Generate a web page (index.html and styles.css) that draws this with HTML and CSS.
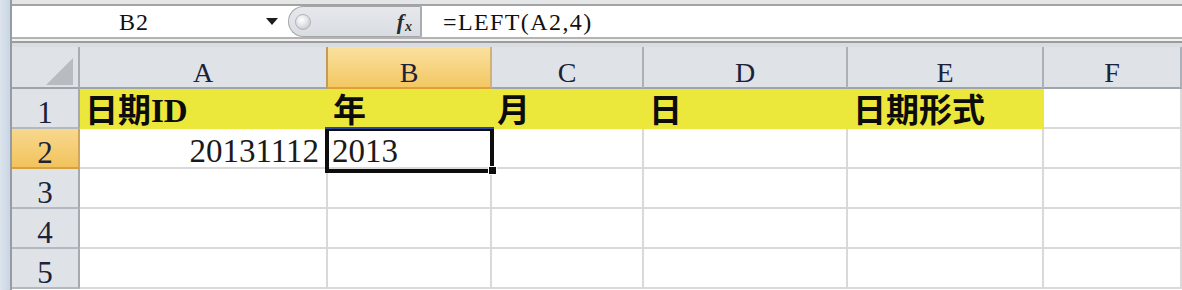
FILE: index.html
```html
<!DOCTYPE html>
<html lang="zh">
<head>
<meta charset="utf-8">
<title>Excel LEFT</title>
<link rel="stylesheet" href="styles.css">
</head>
<body>
<div class="app">
  <div class="strip"></div>
  <div class="main">
    <div class="topband"></div>
    <div class="fbar">
      <div class="namebox"><span class="name">B2</span><span class="caret"></span></div>
      <div class="fxctl"><span class="knob"></span><span class="fx"><i class="f">f</i><i class="x">x</i></span></div>
      <div class="formula">=LEFT(A2,4)</div>
    </div>
    <div class="divider"></div>
    <div class="sheet">
      <div class="c corner"><svg class="tri" width="28" height="27" viewBox="0 0 28 27"><polygon points="27,0 27,27 0,27" fill="#b8bbbf"/></svg></div>
      <div class="c ch ch-a">A</div>
      <div class="c ch ch-sel">B</div>
      <div class="c ch">C</div>
      <div class="c ch">D</div>
      <div class="c ch">E</div>
      <div class="c ch">F</div>

      <div class="c rh">1</div>
      <div class="c y">日期ID</div>
      <div class="c y">年</div>
      <div class="c y">月</div>
      <div class="c y">日</div>
      <div class="c y">日期形式</div>
      <div class="c"></div>

      <div class="c rh rh-sel">2</div>
      <div class="c num right">20131112</div>
      <div class="c num active">2013<div class="sel"><span class="handle"></span></div></div>
      <div class="c"></div>
      <div class="c"></div>
      <div class="c"></div>
      <div class="c"></div>

      <div class="c rh">3</div>
      <div class="c"></div><div class="c"></div><div class="c"></div><div class="c"></div><div class="c"></div><div class="c"></div>

      <div class="c rh">4</div>
      <div class="c"></div><div class="c"></div><div class="c"></div><div class="c"></div><div class="c"></div><div class="c"></div>

      <div class="c rh">5</div>
      <div class="c"></div><div class="c"></div><div class="c"></div><div class="c"></div><div class="c"></div><div class="c"></div>
    </div>
  </div>
</div>
</body>
</html>
```

FILE: styles.css
```css
html, body {
  margin: 0;
  padding: 0;
}
body {
  width: 1182px;
  height: 290px;
  overflow: hidden;
  background: #ffffff;
  font-family: "Liberation Serif", "Noto Sans CJK SC", serif;
  color: #161616;
}
.app {
  display: flex;
  height: 290px;
}
.strip {
  width: 10px;
  flex: none;
  background: linear-gradient(to right, #dde4ec, #c8d5e5);
  border-right: 2px solid #979ca2;
}
.main {
  flex: 1;
  min-width: 0;
  display: flex;
  flex-direction: column;
}
.topband {
  height: 4px;
  background: #e4e5e7;
  border-bottom: 2px solid #a3a3a3;
}
.fbar {
  height: 31px;
  display: flex;
  background: #ffffff;
}
.namebox {
  width: 276px;
  flex: none;
  display: flex;
  align-items: center;
}
.name {
  flex: 1;
  text-align: center;
  font-family: "Liberation Serif", serif;
  font-size: 24px;
  letter-spacing: 1px;
  color: #111;
  padding-top: 2px;
}
.caret {
  width: 32px;
  display: flex;
  justify-content: center;
  align-items: center;
}
.caret::after {
  content: "";
  width: 0;
  height: 0;
  border-left: 6px solid transparent;
  border-right: 6px solid transparent;
  border-top: 7px solid #1e1e1e;
}
.fxctl {
  box-sizing: border-box;
  width: 134px;
  flex: none;
  display: flex;
  align-items: center;
  justify-content: space-between;
  padding: 0 8px 0 6px;
  background: linear-gradient(to bottom, #e6e8eb, #d9dde2);
  border: 1px solid #a4a6a9;
  border-right: 2px solid #a9adb2;
  border-radius: 16px 0 0 16px;
}
.knob {
  width: 16px;
  height: 16px;
  border-radius: 50%;
  background: radial-gradient(circle at 40% 35%, #ffffff 0, #e2e4e7 45%, #b9bcc0 100%);
  border: 1px solid #b0b3b7;
  box-sizing: border-box;
}
.fx {
  font-family: "Liberation Serif", serif;
  font-weight: bold;
  color: #2a2a2a;
  display: flex;
  align-items: baseline;
}
.fx .f {
  font-size: 22px;
}
.fx .x {
  font-size: 14px;
  margin-left: 1px;
  position: relative;
  top: 2px;
}
.formula {
  flex: 1;
  display: flex;
  align-items: center;
  padding-left: 21px;
  font-family: "Liberation Serif", serif;
  font-size: 24px;
  letter-spacing: 1.4px;
  color: #111;
  padding-top: 2px;
}
.divider {
  height: 10px;
  background: linear-gradient(to bottom, #b3b3b3 0, #b3b3b3 2px, #f1f1f1 2px, #f1f1f1 4px, #9c9c9c 4px, #9c9c9c 6px, #d9dce0 6px, #d9dce0 10px);
}
.sheet {
  display: grid;
  grid-template-columns: 68px 248px 164px 152px 204px 196px 1fr;
  grid-template-rows: 42px repeat(5, 40px);
}
.c {
  box-sizing: border-box;
  border-right: 2px solid #d9d9d9;
  border-bottom: 2px solid #d9d9d9;
  white-space: nowrap;
  font-size: 33px;
  line-height: 33px;
}
.corner {
  background: #dfe3e8;
  border-right-color: #a6adb5;
  border-bottom-color: #9ea5ad;
  display: flex;
  justify-content: flex-end;
  align-items: flex-end;
  padding: 0 4px 2px 0;
}
.tri {
  display: block;
}
.ch {
  background: #dfe3e8;
  border-right-color: #abb1b9;
  border-bottom-color: #9ea5ad;
  text-align: center;
  font-size: 28px;
  line-height: 28px;
  padding-top: 12px;
  color: #1c2238;
}
.ch-a {
  border-right-color: #c49a57;
}
.ch-sel {
  background: linear-gradient(to bottom, #fae0a0, #f3c862);
  border-right-color: #d2b07a;
  border-bottom-color: #e29f36;
}
.rh {
  background: #dfe3e8;
  border-right-color: #a3aab2;
  border-bottom-color: #b3b9c0;
  text-align: center;
  font-size: 31px;
  line-height: 31px;
  padding-top: 8px;
  color: #1c2238;
}
.rh-sel {
  background: linear-gradient(to bottom, #f8d88e, #f2c35d);
  border-bottom-color: #d9a040;
  border-right-color: #d0a55c;
}
.y {
  background: #ece83b;
  border-right-color: #ece83b;
  border-bottom-color: #ece83b;
  font-weight: bold;
  padding: 6px 0 0 5px;
  color: #0c0c0c;
}
.num {
  padding-top: 6px;
  color: #1a1a1a;
}
.right {
  text-align: right;
  padding-right: 7px;
}
.active {
  position: relative;
  padding-left: 4px;
}
.sel {
  position: absolute;
  left: -3px;
  top: -2px;
  width: 169px;
  height: 46px;
  box-sizing: border-box;
  border: 4px solid #0d0d0d;
}
.sel::before {
  content: "";
  position: absolute;
  left: -4px;
  right: -4px;
  top: -4px;
  height: 1.5px;
  background: #2747a3;
}
.handle {
  position: absolute;
  right: -7px;
  bottom: -6px;
  width: 7px;
  height: 7px;
  background: #0d0d0d;
  border: 1.5px solid #ffffff;
}
```
